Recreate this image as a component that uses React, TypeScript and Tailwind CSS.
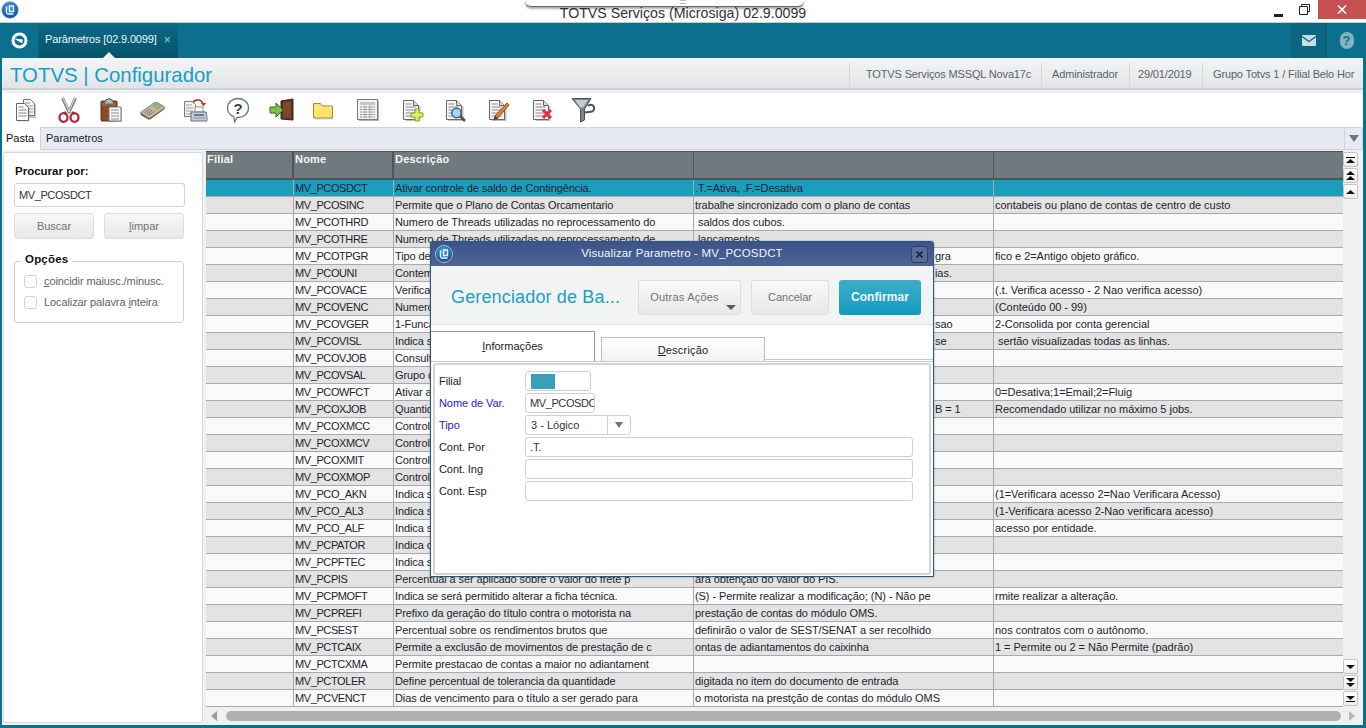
import React from "react";

type Row = [string, string, React.ReactNode, string];

const Off = ({ t }: { t: string }) => <span className="pl-[240px]">{t}</span>;

const rows: Row[] = [
  ["MV_PCOSDCT", "Ativar controle de saldo de Contingência.", ".T.=Ativa, .F.=Desativa", ""],
  ["MV_PCOSINC", "Permite que o Plano de Contas Orcamentario", "trabalhe sincronizado com o plano de contas", "contabeis ou plano de contas de centro de custo"],
  ["MV_PCOTHRD", "Numero de Threads utilizadas no reprocessamento do", " saldos dos cubos.", ""],
  ["MV_PCOTHRE", "Numero de Threads utilizadas no reprocessamento de", " lancamentos", ""],
  ["MV_PCOTPGR", "Tipo de", <Off t="gra" />, "fico e 2=Antigo objeto gráfico."],
  ["MV_PCOUNI", "Contem", <Off t="ias." />, ""],
  ["MV_PCOVACE", "Verifica", "", "(.t. Verifica acesso - 2 Nao verifica acesso)"],
  ["MV_PCOVENC", "Numero", "", "(Conteúdo 00 - 99)"],
  ["MV_PCOVGER", "1-Funcao", <Off t="sao" />, "2-Consolida por conta gerencial"],
  ["MV_PCOVISL", "Indica se", <Off t="se" />, " sertão visualizadas todas as linhas."],
  ["MV_PCOVJOB", "Consulta", "", ""],
  ["MV_PCOVSAL", "Grupo de", "", ""],
  ["MV_PCOWFCT", "Ativar a", "", "0=Desativa;1=Email;2=Fluig"],
  ["MV_PCOXJOB", "Quantid", <Off t="B = 1" />, "Recomendado utilizar no máximo 5 jobs."],
  ["MV_PCOXMCC", "Controla", "", ""],
  ["MV_PCOXMCV", "Controla", "", ""],
  ["MV_PCOXMIT", "Controla", "", ""],
  ["MV_PCOXMOP", "Controla", "", ""],
  ["MV_PCO_AKN", "Indica se", "", "(1=Verificara acesso 2=Nao Verificara Acesso)"],
  ["MV_PCO_AL3", "Indica se", "", "(1-Verificara acesso 2-Nao verificara acesso)"],
  ["MV_PCO_ALF", "Indica se", "", "acesso por entidade."],
  ["MV_PCPATOR", "Indica o", "", ""],
  ["MV_PCPFTEC", "Indica se", "", ""],
  ["MV_PCPIS", "Percentual a ser aplicado sobre o valor do frete p", "ara obtenção do valor do PIS.", ""],
  ["MV_PCPMOFT", "Indica se será permitido alterar a ficha técnica.", "(S) - Permite realizar a modificação; (N) - Não pe", "rmite realizar a alteração."],
  ["MV_PCPREFI", "Prefixo da geração do título contra o motorista na", "prestação de contas do módulo OMS.", ""],
  ["MV_PCSEST", "Percentual sobre os rendimentos brutos que", "definirão o valor de SEST/SENAT a ser recolhido", "nos contratos com o autônomo."],
  ["MV_PCTCAIX", "Permite a exclusão de movimentos de prestação de c", "ontas de adiantamentos do caixinha", "1 = Permite ou 2 = Não Permite (padrão)"],
  ["MV_PCTCXMA", "Permite prestacao de contas a maior no adiantament", "", ""],
  ["MV_PCTOLER", "Define percentual de tolerancia da quantidade", "digitada no item do documento de entrada", ""],
  ["MV_PCVENCT", "Dias de vencimento para o título a ser gerado para", "o motorista na prestção de contas do módulo OMS", ""],
];

const Sheet = ({ children }: { children?: React.ReactNode }) => (
  <svg width="24" height="24" viewBox="0 0 24 24">
    <path d="M4 3h10l5 5v14H4z" fill="#8a8a8a" opacity=".55" transform="translate(1.5 1)" />
    <path d="M3.500 2.500h10l5 5v14h-15z" fill="#f7f7f7" stroke="#666" />
    <path d="M13.500 2.500v5h5" fill="#ddd" stroke="#666" />
    <path d="M5.500 6h6M5.500 9h10M5.500 12h10M5.500 15h10M5.500 18h10" stroke="#8a8a8a" />
    {children}
  </svg>
);

const Tool = {
  copy: (
    <svg width="24" height="24" viewBox="0 0 24 24">
      <path d="M11 2h7l4 4v13H11z" fill="#8a8a8a" opacity=".5" transform="translate(1 1)" />
      <path d="M10.500 1.500h7l4 4v12h-11z" fill="#f3f3f3" stroke="#777" />
      <path d="M12 5h5M12 8h8M12 11h8M12 14h8" stroke="#999" />
      <path d="M4.500 6.500h8l4 4v13h-12z" fill="#8a8a8a" opacity=".45" />
      <path d="M3.500 5.500h8l4 4v13h-12z" fill="#fafafa" stroke="#666" />
      <path d="M5.500 9h5M5.500 12h8M5.500 15h8M5.500 18h8" stroke="#888" />
    </svg>
  ),
  cut: (
    <svg width="24" height="26" viewBox="0 0 24 26">
      <path d="M5.500 1l7 15M18.500 1l-7 15" stroke="#7f858b" strokeWidth="3" />
      <path d="M6 1l6.500 14M18 1l-6.500 14" stroke="#dfe2e5" strokeWidth="1" />
      <path d="M9 15l-2 2M15 15l2 2" stroke="#9c2233" strokeWidth="2.500" />
      <ellipse cx="6.500" cy="20.500" rx="4" ry="4.300" fill="none" stroke="#b2283c" strokeWidth="2.300" />
      <ellipse cx="17.500" cy="20.500" rx="4" ry="4.300" fill="none" stroke="#b2283c" strokeWidth="2.300" />
    </svg>
  ),
  paste: (
    <svg width="24" height="26" viewBox="0 0 24 26">
      <rect x="2" y="4" width="16" height="20" rx="1" fill="#8a4a2c" stroke="#5d3420" />
      <path d="M3.500 5.500h13v3h-13z" fill="#a96a48" />
      <path d="M7 4V2.500h2l1-1.500 1 1.500h2V4l1.500 1v2h-9V5z" fill="#b9b9b9" stroke="#666" />
      <path d="M11 11h12v14H11z" fill="#8a8a8a" opacity=".5" />
      <path d="M10 10h12v14H10z" fill="#fafafa" stroke="#777" />
      <path d="M12 13h8M12 16h8M12 19h8M12 22h8" stroke="#888" />
    </svg>
  ),
  calc: (
    <svg width="25" height="24" viewBox="0 0 25 24">
      <path d="M.5 15L14 6c1.200-.8 2.300-.8 3.500-.2l6.500 3.700c.8.500.8 1.300 0 2L11 21c-1.200.8-2.400.8-3.600.1L.9 17.200z" fill="#6f6452" />
      <path d="M.5 14.500L14 5c1.200-.8 2.300-.8 3.500-.2l6.500 3.700c.8.500.8 1.300 0 2L11 19.500c-1.200.8-2.400.8-3.600.1z" fill="#c2b69f" stroke="#75695a" strokeWidth=".8" />
      <path d="M13.500 8l3-2.100 4.200 2.500-3 2.200z" fill="#8dcc77" stroke="#4e8443" strokeWidth=".6" />
      <path d="M5 14.500l5.500-3.900M7 15.800l5.500-3.900M9 17l5.500-3.900" stroke="#7d7260" strokeWidth="1.200" strokeDasharray="1.400 .8" />
    </svg>
  ),
  print: (
    <svg width="25" height="25" viewBox="0 0 25 25">
      <path d="M1.500 3.500h8l3 3v12h-11z" fill="#f5f5f5" stroke="#777" />
      <path d="M3 7h6M3 10h7M3 13h7M3 16h7" stroke="#999" />
      <path d="M10 4c4-3.500 9-2.500 10 2" fill="none" stroke="#c9302c" strokeWidth="1.700" />
      <path d="M18 5l2.500 3.500L23 5z" fill="#c9302c" />
      <path d="M12 9h8v5h-8z" fill="#fff" stroke="#888" />
      <path d="M8 14h15l1 5v4H8z" fill="#c9cdd2" stroke="#6a6f75" />
      <path d="M11 16h10v2H11z" fill="#5a7db0" />
      <path d="M10 20h12" stroke="#8a8f95" />
    </svg>
  ),
  help: (
    <svg width="24" height="26" viewBox="0 0 24 26">
      <path d="M12 1.500c6 0 10.500 4 10.500 9.500s-4.500 9.500-10 9.500c-.6 0-1 0-1.500-.1L8.500 25l-.8-5.500C4 18 1.500 15 1.500 11 1.500 5.500 6 1.500 12 1.500z" fill="#fcfcfc" stroke="#70767c" strokeWidth="1.300" />
      <text x="12" y="16.500" textAnchor="middle" fontSize="15" fontWeight="700" fill="#3d4146" fontFamily="Liberation Sans">?</text>
    </svg>
  ),
  exit: (
    <svg width="25" height="24" viewBox="0 0 25 24">
      <path d="M12 3l12-2v21l-12-1z" fill="#5d3121" stroke="#3e2216" />
      <path d="M14 4.500l8-1.300v17l-8-.6z" fill="#7d4730" />
      <path d="M1 9h6V5l7 7-7 7v-4H1z" fill="#7cc444" stroke="#2d6b2a" />
    </svg>
  ),
  folder: (
    <svg width="22" height="20" viewBox="0 0 22 20">
      <path d="M1.500 3.500h7l2 2.500h10v12h-19z" fill="#ffe36b" stroke="#a98a2a" />
      <path d="M2 7.500h18" stroke="#fff3ae" />
      <path d="M3 18.800h18" stroke="#b5b5b5" />
    </svg>
  ),
  table: (
    <svg width="22" height="22" viewBox="0 0 22 22">
      <rect x="2" y="2" width="20" height="20" fill="#b4b4b4" />
      <rect x=".5" y=".5" width="20" height="20" fill="#f4f4f4" stroke="#7a7a7a" />
      <path d="M3 3h15v3H3z" fill="#c6c6c6" />
      <path d="M3 8h15M3 10.500h15M3 13h15M3 15.500h15M3 18h15M8 6.500V19M13 6.500V19" stroke="#8f8f8f" strokeDasharray="2 .7" />
    </svg>
  ),
  add: (
    <Sheet>
      <path d="M15 11h4v4h4v4h-4v4h-4v-4h-4v-4h4z" fill="#dff05c" stroke="#8a9a30" />
    </Sheet>
  ),
  find: (
    <Sheet>
      <path d="M17 18l5 5" stroke="#6a4a32" strokeWidth="2.600" />
      <circle cx="13.500" cy="15" r="4.700" fill="#a9d3f2" stroke="#3e5f86" strokeWidth="1.500" />
    </Sheet>
  ),
  edit: (
    <Sheet>
      <path d="M21 5l2 2-11 13-4 2 1-4z" fill="#e2803a" stroke="#a14a1c" />
      <path d="M8 22l1-4 3 2z" fill="#3a3a3a" />
    </Sheet>
  ),
  del: (
    <Sheet>
      <path d="M13 12l8 8M21 12l-8 8" stroke="#e33038" strokeWidth="3" />
    </Sheet>
  ),
  filter: (
    <svg width="25" height="26" viewBox="0 0 25 26">
      <path d="M1 1.500h19L13.500 12v11l-4 2V12z" fill="#7f8489" stroke="#4d5155" />
      <path d="M4 3h13l-5 7.500h-3z" fill="#c7cacd" />
      <path d="M17 9a3.500 3.500 0 1 1 4 5.500l-7 1" fill="none" stroke="#4d5155" strokeWidth="2" />
    </svg>
  ),
};

const toolbar: [keyof typeof Tool, string][] = [
  ["copy", "w-[44px]"], ["cut", "w-[42px]"], ["paste", "w-[41px]"], ["calc", "w-[43px]"],
  ["print", "w-[43px]"], ["help", "w-[43px]"], ["exit", "w-[43px]"], ["folder", "w-[45px]"],
  ["table", "w-[43px]"], ["add", "w-[43px]"], ["find", "w-[43px]"], ["edit", "w-[44px]"],
  ["del", "w-[41px]"], ["filter", "w-[30px]"],
];

const Globe = ({ size }: { size: number }) => (
  <svg width={size} height={size} viewBox="0 0 18 18">
    <defs>
      <radialGradient id="gl" cx=".45" cy=".35" r=".7">
        <stop offset="0" stopColor="#4aa6e6" />
        <stop offset="1" stopColor="#0b3f86" />
      </radialGradient>
    </defs>
    <circle cx="9" cy="9" r="8.500" fill="url(#gl)" stroke="#c7d3de" strokeWidth=".8" />
    <path d="M5.500 5.500v6c0 1 .8 1.500 1.500 1.500h5.500M8.500 5h4v5.500h-4z" fill="none" stroke="#eaf5ff" strokeWidth="1.300" />
  </svg>
);

const Tri = ({ d }: { d: "up" | "down" }) => (
  <svg width="9" height="4" viewBox="0 0 9 4" className="block">
    <path d={d === "up" ? "M4.500 0L9 4H0z" : "M0 0h9L4.500 4z"} fill="#111" />
  </svg>
);

const Side = ({ n, dir, bar }: { n: number; dir: "up" | "down"; bar?: boolean }) => (
  <div className="h-[15px] w-[15px] rounded-[2px] border border-[#c4c4c4] bg-gradient-to-b from-white to-[#ececec] flex flex-col items-center justify-center gap-[1px] mb-[1px]">
    {bar && dir === "up" && <div className="h-[1px] w-[9px] bg-black" />}
    {n >= 1 && <Tri d={dir} />}
    {n >= 2 && <Tri d={dir} />}
    {bar && dir === "down" && <div className="h-[1px] w-[9px] bg-black" />}
  </div>
);

const Cell = ({ w, track, children }: { w: string; track: string; children?: React.ReactNode }) => (
  <div className={`${w} ${track} shrink-0 h-full border-r border-[#a9a9a9] pl-[1px] overflow-hidden whitespace-pre leading-[16px]`}>{children}</div>
);

const Btn = ({ w, children }: { w: string; children: React.ReactNode }) => (
  <div className={`${w} h-[35px] rounded-[3px] border border-[#dcdcdc] bg-gradient-to-b from-[#f9f9f9] to-[#e8e8e8] flex items-center justify-center text-[12px] text-[#6d7478] relative`}>{children}</div>
);

const FieldRow = ({ label, blue, children }: { label: string; blue?: boolean; children: React.ReactNode }) => (
  <div className="flex items-center h-[20px] mb-[2px]">
    <div className={`w-[86px] text-[11px] tracking-[-0.08px] ${blue ? "text-[#2222dd]" : "text-[#222]"}`}>{label}</div>
    {children}
  </div>
);

export default function App() {
  return (
    <div className="relative w-[1366px] h-[728px] overflow-hidden bg-white flex flex-col font-['Liberation_Sans',Arial,sans-serif] text-[#1d2530]">
      {/* window title */}
      <div className="relative h-[23px] shrink-0 bg-white border-b border-[#c9cccc] flex items-start justify-center">
        <div className="absolute left-[1px] top-[1px]"><Globe size={18} /></div>
        <div className="text-[14.2px] leading-[18px] mt-[4px] text-[#333] whitespace-nowrap">TOTVS Serviços (Microsiga) 02.9.0099</div>
        <div className="absolute left-[525px] top-0 w-[279px] h-[7px] bg-white rounded-b-[6px] border-b border-[#666] shadow-[0_2px_2px_rgba(0,0,0,0.3)]">
          <div className="absolute left-[155px] top-[0px] w-[6px] h-[4px] border-y border-[#bbb]" />
        </div>
        <div className="absolute left-[1274px] top-[14px] w-[9px] h-[3px] bg-[#222]" />
        <svg className="absolute left-[1299px] top-[4px]" width="11" height="11" viewBox="0 0 11 11">
          <path d="M2.500 2.500V.5h8v7h-2M.5 2.500h8v8h-8z" fill="none" stroke="#222" />
        </svg>
        <div className="absolute right-0 top-0 w-[48px] h-[19px] bg-[#c75050] flex items-center justify-center text-white">
          <svg width="10" height="9" viewBox="0 0 10 9"><path d="M1 .5l8 8M9 .5l-8 8" stroke="#fff" strokeWidth="1.600" /></svg>
        </div>
      </div>

      {/* teal bar */}
      <div className="h-[35px] shrink-0 bg-[#0b6f8d] flex text-white">
        <div className="w-[38px] flex items-center justify-center">
          <svg width="17" height="17" viewBox="0 0 17 17">
            <circle cx="8.500" cy="8.500" r="6.500" fill="none" stroke="#fff" strokeWidth="3" />
            <path d="M3 6.500l9 1-1 4z" fill="#fff" />
          </svg>
        </div>
        <div className="relative w-[140px] bg-gradient-to-b from-[#0a6a86] to-[#08536b] flex items-center text-[11px] pl-[6px] pb-[2px] border-l border-[#0a627d]">
          <span className="text-[#eef6f8] tracking-[-0.15px]">Parâmetros [02.9.0099]</span>
          <span className="ml-[7px] text-[12px] text-[#a7c9d4]">×</span>
          <div className="absolute left-[64px] bottom-0 w-0 h-0 border-x-[6px] border-x-transparent border-b-[6px] border-b-[#eef0f1]" />
        </div>
        <div className="flex-1" />
        <div className="w-[36px] bg-[#0a657f] border-r border-[#0a5a73] flex items-center justify-center">
          <svg width="14" height="11" viewBox="0 0 14 11">
            <rect width="14" height="11" rx="1" fill="#c5dde5" />
            <path d="M0 1.500l7 5 7-5" fill="none" stroke="#0a657f" strokeWidth="1.300" />
          </svg>
        </div>
        <div className="w-[39px] flex items-center justify-center">
          <div className="w-[14px] h-[17px] rounded-[7px] bg-[#87b2c0] text-[#0b6f8d] font-bold text-[13px] leading-[17px] text-center">?</div>
        </div>
      </div>

      {/* body frame */}
      <div className="flex-1 min-h-0 flex flex-col border-x-[3px] border-b-[3px] border-[#0b6f8d] border-l-[2px]">
        <div className="h-[32px] shrink-0 bg-gradient-to-b from-[#f3f5f6] to-[#e2e5e7] border-b-2 border-[#cdd0d2] flex items-center pl-[8px] pt-[3px]">
          <div className="text-[20.4px] text-[#169fc4] leading-[28px]">TOTVS | Configurador</div>
          <div className="flex-1" />
          <div className="flex items-center text-[11px] text-[#59636a] tracking-[-0.15px] h-[24px]">
            <div className="w-[192px] h-full border-l border-[#d4d7d9] flex items-center pl-[16px]">TOTVS Serviços MSSQL Nova17c</div>
            <div className="w-[88px] h-full border-l border-[#d4d7d9] flex items-center pl-[10px]">Administrador</div>
            <div className="w-[73px] h-full border-l border-[#d4d7d9] flex items-center pl-[8px]">29/01/2019</div>
            <div className="w-[161px] h-full border-l border-[#d4d7d9] flex items-center pl-[10px] whitespace-nowrap overflow-hidden">Grupo Totvs 1 / Filial Belo Hor</div>
          </div>
        </div>
        <div className="h-[3px] shrink-0 bg-[#f0f0f0]" />
        <div className="h-[34px] shrink-0 bg-white flex items-center pl-[11px]">
          {toolbar.map(([k, w]) => <div key={k} className={`${w} shrink-0`}>{Tool[k]}</div>)}
        </div>

        {/* tab strip */}
        <div className="h-[23px] shrink-0 flex text-[11px]">
          <div className="w-[38px] bg-white flex items-center pl-[4px] text-[#111]">Pasta</div>
          <div className="flex-1 bg-[#e7eaf3] border border-[#cfd3d8] flex items-center pl-[5px] text-[#222] rounded-tr-[3px]">
            Parametros
            <div className="flex-1" />
            <div className="w-[18px] h-full border-l border-[#d0d3d8] flex items-center justify-center">
              <div className="w-0 h-0 border-x-[5px] border-x-transparent border-t-[7px] border-t-[#6d7583]" />
            </div>
          </div>
        </div>

        <div className="flex-1 min-h-0 flex">
          {/* left panel */}
          <div className="w-[202px] shrink-0 pl-[1px] pt-[2px] pb-[2px] pr-[1px] bg-[#f2f2f2]">
            <div className="h-full rounded-[2px] border border-[#d8d8d8] bg-white pl-[10px] pr-[17px] pt-[11px]">
              <div className="ml-[1px] text-[11.5px] font-bold text-[#111] leading-[14px]">Procurar por:</div>
              <div className="mt-[5px] h-[24px] w-[171px] rounded-[3px] border border-[#d4d4d4] flex items-center pl-[4px] text-[11px] tracking-[-0.4px] text-[#333]">MV_PCOSDCT</div>
              <div className="mt-[6px] flex gap-[10px]">
                <div className="w-[80px] h-[26px] rounded-[3px] border border-[#dcdcdc] bg-gradient-to-b from-[#f8f8f8] to-[#e8e8e8] flex items-center justify-center text-[11px] text-[#6d7478]">Buscar</div>
                <div className="w-[80px] h-[26px] rounded-[3px] border border-[#dcdcdc] bg-gradient-to-b from-[#f8f8f8] to-[#e8e8e8] flex items-center justify-center text-[11px] text-[#6d7478]"><span><u>l</u>impar</span></div>
              </div>
              <div className="relative mt-[22px] w-[170px] h-[62px] rounded-[3px] border border-[#cfcfcf] pl-[9px] pt-[12px] text-[11px] text-[#5c6468] tracking-[-0.1px]">
                <div className="absolute left-[6px] -top-[10px] bg-white px-[4px] text-[11.5px] leading-[14px] font-bold text-[#111] tracking-[0.2px]">Opções</div>
                <div className="flex items-center gap-[7px] h-[14px] mb-[7px]">
                  <div className="w-[13px] h-[13px] rounded-[3px] border border-[#d4d4d4]" />
                  <span><u>c</u>oincidir maiusc./minusc.</span>
                </div>
                <div className="flex items-center gap-[7px] h-[14px]">
                  <div className="w-[13px] h-[13px] rounded-[3px] border border-[#d4d4d4]" />
                  <span>Localizar palavra <u>i</u>nteira</span>
                </div>
              </div>
            </div>
          </div>

          {/* browse */}
          <div className="flex-1 min-w-0 flex flex-col bg-[#f0f0f0]">
            <div className="flex-1 min-h-0 flex pt-[1px] pl-[2px]">
              <div className="w-[1137px] shrink-0 flex flex-col">
                <div className="h-[29px] shrink-0 bg-[#6e7a7e] border-b-2 border-[#4c5558] flex text-[11px] font-bold text-[#f4f6f6] tracking-[0.2px] border-t border-t-[#555]">
                  <div className="w-[88px] border-r-2 border-[#4c5558] pl-[1px] leading-[14px]">Filial</div>
                  <div className="w-[100px] border-r-2 border-[#4c5558] pl-[1px] leading-[14px]">Nome</div>
                  <div className="w-[300px] border-r border-[#4c5558] pl-[1px] leading-[14px]">Descrição</div>
                  <div className="w-[300px] border-r border-[#4c5558]" />
                  <div className="flex-1" />
                </div>
                {rows.map((r, i) => (
                  <div
                    key={r[0]}
                    className={`h-[17px] shrink-0 flex text-[11px] text-[#1c2430] border-b border-[#a9a9a9] ${
                      i === 0 ? "bg-[#1b9dbe]" : i % 2 === 1 ? "bg-[#e3e3e3]" : "bg-[#fafafa]"
                    }`}
                  >
                    <Cell w="w-[88px]" track="" />
                    <Cell w="w-[100px]" track="tracking-[-0.4px]">{r[0]}</Cell>
                    <Cell w="w-[300px]" track="tracking-[-0.1px]">{r[1]}</Cell>
                    <Cell w="w-[300px]" track="tracking-[-0.07px]">{r[2]}</Cell>
                    <div className="flex-1 pl-[1px] overflow-hidden whitespace-pre leading-[16px] tracking-[-0.03px]">{r[3]}</div>
                  </div>
                ))}
              </div>
              <div className="flex-1 flex flex-col pt-[1px]">
                <Side n={1} dir="up" bar />
                <Side n={2} dir="up" />
                <Side n={1} dir="up" />
                <div className="flex-1" />
                <Side n={1} dir="down" />
                <Side n={2} dir="down" />
                <Side n={1} dir="down" bar />
              </div>
            </div>
            <div className="h-[18px] shrink-0 flex items-center pl-[7px] pr-[3px]">
              <div className="w-0 h-0 border-y-[5px] border-y-transparent border-r-[6px] border-r-[#9a9a9a]" />
              <div className="ml-[9px] h-[10px] w-[1115px] rounded-[5px] bg-[#b0b0b0]" />
              <div className="ml-[8px] w-0 h-0 border-y-[5px] border-y-transparent border-l-[6px] border-l-[#b8b8b8]" />
            </div>
          </div>
        </div>
      </div>

      {/* dialog */}
      <div className="absolute left-[430px] top-[241px] w-[504px] h-[336px] bg-white border border-[#24598c] rounded-t-[3px] shadow-[0_0_2px_rgba(0,0,0,0.4)] flex flex-col">
        <div className="relative h-[24px] shrink-0 bg-gradient-to-b from-[#3a5389] to-[#4e6495] flex items-center justify-center text-[11.5px] text-[#f4f6fb]">
          <div className="absolute left-[4px] top-[3px]"><Globe size={18} /></div>
          <span className="tracking-[0.15px] pb-[1px]">Visualizar Parametro - MV_PCOSDCT</span>
          <div className="absolute right-[5px] top-[4px] w-[17px] h-[17px] rounded-[3px] border border-[#2d3f6b] bg-[#5a6d99] flex items-center justify-center">
            <svg width="7" height="7" viewBox="0 0 7 7"><path d="M.5.5l6 6M6.500.5l-6 6" stroke="#15233f" strokeWidth="1.600" /></svg>
          </div>
        </div>
        <div className="h-[59px] shrink-0 bg-[#f2f4f4] border-b border-[#dfe1e1] flex items-center pl-[20px] pt-[4px]">
          <div className="w-[187px] text-[18px] text-[#1a9fc3] tracking-[0.15px] whitespace-nowrap">Gerenciador de Ba...</div>
          <Btn w="w-[103px]">
            <span className="pr-[10px] text-[11px] tracking-[0.2px]">Outras Ações</span>
            <div className="absolute right-[4px] bottom-[4px] w-0 h-0 border-x-[5px] border-x-transparent border-t-[5px] border-t-[#555b60]" />
          </Btn>
          <div className="w-[10px]" />
          <Btn w="w-[78px]"><span className="text-[11px]">Cancelar</span></Btn>
          <div className="w-[10px]" />
          <div className="w-[82px] h-[35px] rounded-[3px] bg-gradient-to-b from-[#39adca] to-[#119bbf] flex items-center justify-center text-[12px] font-bold text-[#eef9fc] tracking-[0.1px]">Confirmar</div>
        </div>
        <div className="h-[36px] shrink-0 flex items-end text-[11px] text-[#222]">
          <div className="w-[164px] h-[30px] bg-white border border-l-0 border-b-0 border-[#999] flex items-center justify-center pb-[1px]"><span><u>I</u>nformações</span></div>
          <div className="w-[6px]" />
          <div className="w-[164px] h-[24px] bg-gradient-to-b from-white to-[#f2f2f2] border border-b-0 border-[#bcbcbc] flex items-center justify-center pt-[2px] tracking-[0.2px]"><span><u>D</u>escrição</span></div>
          <div className="flex-1 h-[2px] border-t border-[#c8c8c8]" />
        </div>
        <div className="flex-1 min-h-0 border-t border-[#c8c8c8] px-[2px] pt-[1px] pb-[1px]">
          <div className="h-full rounded-[3px] border-2 border-[#d4d4d4] pl-[4px] pt-[6px]">
            <FieldRow label="Filial">
              <div className="w-[66px] h-[20px] rounded-[3px] border border-[#cfcfcf] flex items-center pl-[5px]"><div className="w-[24px] h-[15px] bg-[#3a9fb9]" /></div>
            </FieldRow>
            <FieldRow label="Nome de Var." blue>
              <div className="w-[70px] h-[20px] rounded-[3px] border border-[#cfcfcf] pl-[4px] pr-[1px] text-[11px] leading-[18px] tracking-[-0.4px] overflow-hidden whitespace-nowrap text-[#333]">MV_PCOSDCT</div>
            </FieldRow>
            <FieldRow label="Tipo" blue>
              <div className="w-[106px] h-[20px] rounded-[3px] border border-[#cfcfcf] flex items-center text-[11px] text-[#333]">
                <div className="w-[81px] pl-[5px]">3 - Lógico</div>
                <div className="flex-1 h-full border-l border-[#cfcfcf] flex items-center justify-center">
                  <div className="w-0 h-0 border-x-[4px] border-x-transparent border-t-[6px] border-t-[#6d7583]" />
                </div>
              </div>
            </FieldRow>
            <FieldRow label="Cont. Por">
              <div className="w-[388px] h-[20px] rounded-[3px] border border-[#cfcfcf] pl-[4px] text-[11px] leading-[18px] text-[#333]">.T.</div>
            </FieldRow>
            <FieldRow label="Cont. Ing">
              <div className="w-[388px] h-[20px] rounded-[3px] border border-[#cfcfcf]" />
            </FieldRow>
            <FieldRow label="Cont. Esp">
              <div className="w-[388px] h-[20px] rounded-[3px] border border-[#cfcfcf]" />
            </FieldRow>
          </div>
        </div>
      </div>
    </div>
  );
}
